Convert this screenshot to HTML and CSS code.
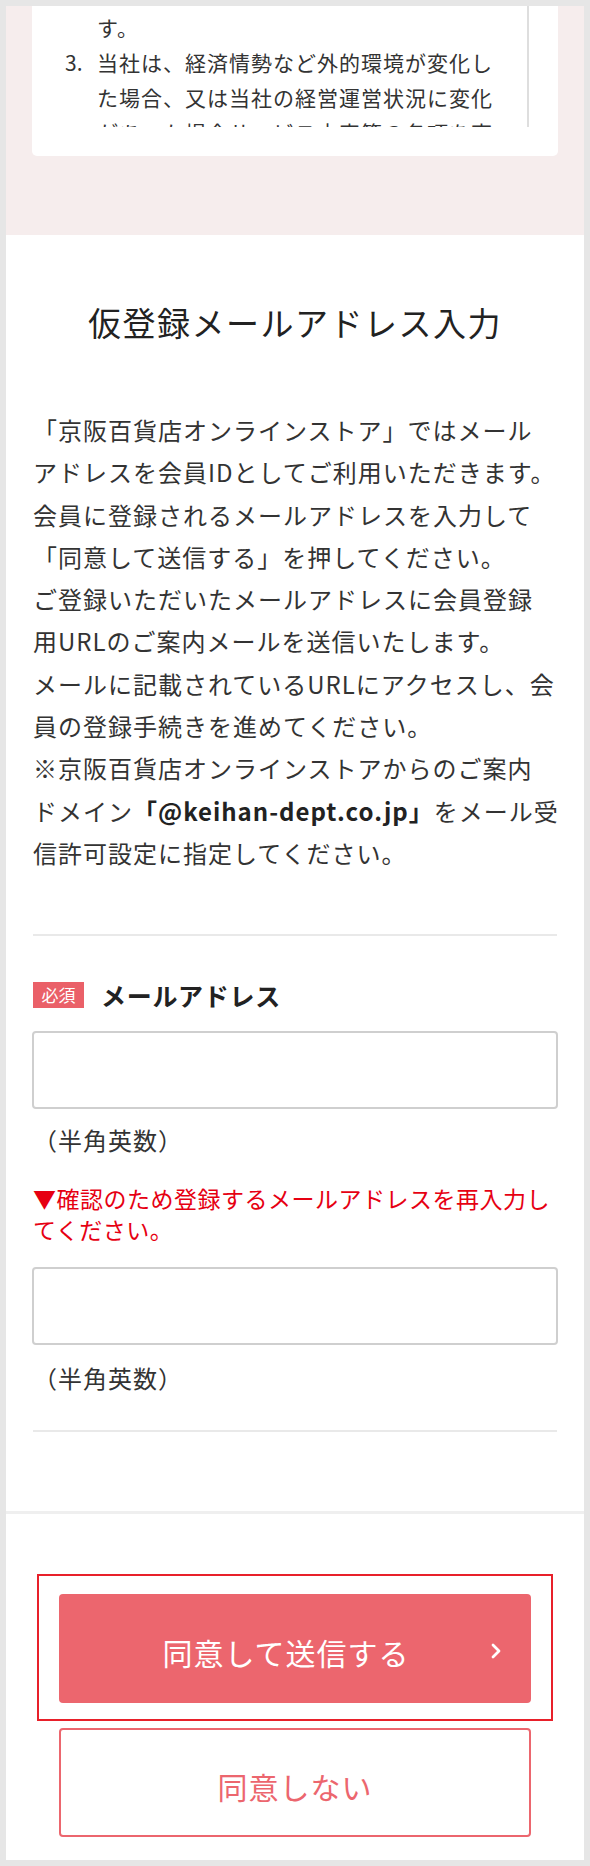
FILE: index.html
```html
<!DOCTYPE html>
<html lang="ja">
<head>
<meta charset="utf-8">
<title>仮登録メールアドレス入力</title>
<link rel="stylesheet" href="styles.css">
</head>
<body>
<div class="frame">
  <section class="terms">
    <div class="terms-card">
      <div class="terms-scroll">
        <ol class="terms-list">
          <li class="item"><span class="num"></span><span class="txt">す。</span></li>
          <li class="item"><span class="num">3.</span><span class="txt">当社は、経済情勢など外的環境が変化した場合、又は当社の経営運営状況に変化があった場合サービス内容等の各項を変更することがあります。</span></li>
        </ol>
      </div>
    </div>
  </section>

  <section class="form">
    <h1 class="title">仮登録メールアドレス入力</h1>
    <p class="lead">「京阪百貨店オンラインストア」ではメール<br>アドレスを会員IDとしてご利用いただきます。<br>会員に登録されるメールアドレスを入力して<br>「同意して送信する」を押してください。<br>ご登録いただいたメールアドレスに会員登録<br>用URLのご案内メールを送信いたします。<br>メールに記載されているURLにアクセスし、会<br>員の登録手続きを進めてください。<br>※京阪百貨店オンラインストアからのご案内<br>ドメイン<strong class="domain">「@keihan-dept.co.jp」</strong>をメール受<br>信許可設定に指定してください。</p>
    <div class="divider"></div>
    <div class="field-label">
      <span class="badge">必須</span>
      <span class="label-text">メールアドレス</span>
    </div>
    <input class="text-input" type="email" aria-label="メールアドレス">
    <p class="hint">（半角英数）</p>
    <p class="notice">▼確認のため登録するメールアドレスを再入力し<br>てください。</p>
    <input class="text-input input-confirm" type="email" aria-label="メールアドレス（確認）">
    <p class="hint hint-confirm">（半角英数）</p>
    <div class="divider divider-bottom"></div>
  </section>

  <section class="actions">
    <div class="highlight">
      <button class="btn btn-primary" type="button">同意して送信する<svg class="chev" width="14" height="18" viewBox="0 0 14 18"><polyline points="4,3 10,9 4,15" fill="none" stroke="#fff" stroke-width="2.8" stroke-linecap="round" stroke-linejoin="round"/></svg></button>
    </div>
    <button class="btn btn-secondary" type="button">同意しない</button>
  </section>
</div>
</body>
</html>
```

FILE: styles.css
```css
* { box-sizing: border-box; }

html, body {
  margin: 0;
  padding: 0;
}

body {
  font-family: "Noto Sans CJK JP", "Noto Sans", sans-serif;
  color: #333;
  background: #e6e6e6;
}

.frame {
  width: 590px;
  height: 1866px;
  border: 6px solid #e6e6e6;
  background: #fff;
  display: flex;
  flex-direction: column;
  overflow: hidden;
}

/* ---------- terms (scrolled) ---------- */
.terms {
  background: #f6eded;
  padding: 0 26px 79px;
}

.terms-card {
  background: #fff;
  border-radius: 0 0 5px 5px;
  padding: 0 29px 29px 0;
}

.terms-scroll {
  height: 121px;
  overflow: hidden;
  padding: 4px 22px 0 33px;
  border-right: 2px solid #dedede;
}

.terms-list {
  list-style: none;
  margin: 0;
  padding: 0;
  font-size: 21px;
  letter-spacing: 1px;
  line-height: 35px;
  color: #333;
}

.item {
  display: grid;
  grid-template-columns: 32px 408px;
}

.num {
  letter-spacing: 0;
}

/* ---------- form ---------- */
.form {
  padding: 62px 27px 79px;
  display: flex;
  flex-direction: column;
}

.title {
  margin: 0;
  font-size: 33px;
  font-weight: 400;
  letter-spacing: 1.5px;
  line-height: 50px;
  text-align: center;
  color: #222;
}

.lead {
  margin: 62px 0 0;
  font-size: 24px;
  letter-spacing: 1px;
  line-height: 42.3px;
  white-space: nowrap;
  color: #333;
}

.domain {
  font-weight: 700;
  color: #222;
}

.divider {
  margin-top: 60px;
  height: 2px;
  background: #e9e9e9;
}

.field-label {
  margin-top: 41px;
  height: 36px;
  display: flex;
  align-items: center;
  gap: 17px;
}

.badge {
  width: 51px;
  height: 26px;
  background: #ea6068;
  color: #fff;
  font-size: 17px;
  line-height: 26px;
  text-align: center;
  letter-spacing: 0;
}

.label-text {
  font-size: 25px;
  font-weight: 700;
  letter-spacing: 0.7px;
  color: #222;
  line-height: 36px;
}

.text-input {
  display: block;
  margin: 18px -1px 0;
  height: 78px;
  border: 2px solid #cfcfcf;
  border-radius: 4px;
  background: #fff;
  font-size: 24px;
  padding: 0 12px;
  font-family: inherit;
  outline: none;
}

.input-confirm {
  margin-top: 22px;
}

.hint {
  margin: 10px 0 0;
  font-size: 24px;
  line-height: 42px;
  letter-spacing: 1px;
  color: #333;
}

.hint-confirm {
  margin-top: 12px;
}

.notice {
  margin: 22px 0 0;
  font-size: 23px;
  letter-spacing: 0.5px;
  line-height: 31px;
  color: #e60012;
  white-space: nowrap;
}

.divider-bottom {
  margin-top: 31px;
}

/* ---------- actions ---------- */
.actions {
  border-top: 3px solid #efefef;
  padding: 60px 53px 23px;
  display: flex;
  flex-direction: column;
}

.highlight {
  margin: 0 -22px;
  border: 2px solid #e8202a;
  padding: 18px 20px 16px;
}

.btn {
  display: flex;
  align-items: center;
  justify-content: center;
  width: 100%;
  height: 109px;
  border-radius: 4px;
  font-family: inherit;
  font-size: 30px;
  letter-spacing: 1px;
  padding: 7px 0 0;
  cursor: pointer;
}

.btn-primary {
  position: relative;
  background: #ec666e;
  border: none;
  color: #fff;
  padding-right: 18px;
}

.chev {
  position: absolute;
  right: 28px;
  top: 50%;
  margin-top: -7px;
}

.btn-secondary {
  margin-top: 7px;
  background: #fff;
  border: 2px solid #ec666e;
  color: #ec666e;
}
```
